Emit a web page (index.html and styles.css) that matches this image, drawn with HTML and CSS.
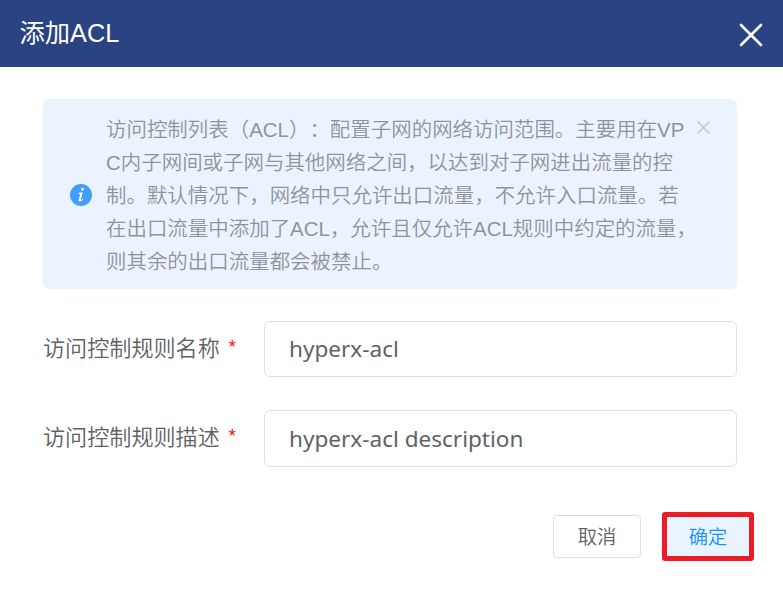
FILE: index.html
```
<!DOCTYPE html>
<html lang="zh-CN">
<head>
<meta charset="utf-8">
<title>添加ACL</title>
<link rel="stylesheet" href="styles.css">
</head>
<body>
<div class="dialog">
  <header class="dialog-header">
    <h1 class="dialog-title">添加ACL</h1>
    <button class="dialog-close" type="button">
      <svg width="24" height="24" viewBox="0 0 24 24"><path d="M2 2L22 22M22 2L2 22" fill="none" stroke="#fff" stroke-width="2.6" stroke-linecap="round"/></svg>
    </button>
  </header>
  <main class="dialog-body">
    <div class="alert">
      <svg class="alert-icon" width="22" height="22" viewBox="0 0 22 22"><circle cx="11" cy="11" r="11" fill="#409eff"/><circle cx="12.5" cy="5.3" r="1.5" fill="#fff"/><path d="M8.2 9.1L12.7 8.3L10.9 15.3Q10.7 16.3 11.4 15.9Q12.1 15.5 12.7 14.6L13.3 15.1Q11.6 17.7 9.6 17.6Q8.2 17.4 8.7 15.5L10.1 10.3Q10.3 9.6 8.1 9.7Z" fill="#fff"/></svg>
      <p class="alert-text"><span class="line">访问控制列表（ACL）：配置子网的网络访问范围。主要用在VP</span><span class="line">C内子网间或子网与其他网络之间，以达到对子网进出流量的控</span><span class="line">制。默认情况下，网络中只允许出口流量，不允许入口流量。若</span><span class="line">在出口流量中添加了ACL，允许且仅允许ACL规则中约定的流量，</span><span class="line">则其余的出口流量都会被禁止。</span></p>
      <svg class="alert-close" width="13" height="13" viewBox="0 0 13 13"><path d="M.5 .5L12.5 12.5M12.5 .5L.5 12.5" fill="none" stroke="#c0c4cc" stroke-width="1.4"/></svg>
    </div>
    <form class="form">
      <div class="field">
        <label class="label" for="name">访问控制规则名称<span class="required">*</span></label>
        <input class="input" id="name" type="text" value="hyperx-acl">
      </div>
      <div class="field">
        <label class="label" for="desc">访问控制规则描述<span class="required">*</span></label>
        <input class="input input-desc" id="desc" type="text" value="hyperx-acl description">
      </div>
    </form>
  </main>
  <footer class="dialog-footer">
    <button class="button" type="button">取消</button>
    <button class="button button-confirm" type="button">确定</button>
  </footer>
</div>
</body>
</html>
```
FILE: styles.css
```
* {
  box-sizing: border-box;
}

body {
  margin: 0;
  background: #fff;
  color: #606266;
  font-family: "Liberation Sans", "Noto Sans CJK SC", sans-serif;
  font-weight: 350;
  text-spacing-trim: space-all;
}

.dialog {
  width: 783px;
  height: 589px;
  overflow: hidden;
}

.dialog-header {
  display: flex;
  align-items: center;
  justify-content: space-between;
  height: 67px;
  padding: 0 20px 0 19.5px;
  background: #294383;
}

.dialog-title {
  margin: 0 0 1px;
  color: #fff;
  font-size: 25.3px;
  font-weight: 400;
  line-height: 36px;
}

.dialog-close {
  display: flex;
  margin-top: 3px;
  padding: 0;
  border: 0;
  background: none;
}

.dialog-body {
  padding: 32px 46px 0 43px;
}

.alert {
  display: flex;
  align-items: center;
  height: 190px;
  padding: 0 27px;
  border-radius: 6px;
  background: #ebf3ff;
  color: #909399;
}

.alert-icon {
  flex: none;
  margin-top: 1px;
}

.alert-text {
  width: 591px;
  margin: 2px 0 0 14px;
  font-size: 20.47px;
  line-height: 33px;
}

.line {
  display: block;
  white-space: nowrap;
}

.alert-close {
  flex: none;
  align-self: flex-start;
  margin-top: 22px;
}

.form {
  display: flex;
  flex-direction: column;
  gap: 33px;
  margin-top: 32px;
}

.field {
  display: flex;
  align-items: flex-start;
}

.label {
  display: flex;
  width: 221px;
  font-size: 22.1px;
  line-height: 56px;
}

.required {
  margin-left: 9px;
  color: #f00;
  font-size: 18px;
  line-height: 52px;
}

.input {
  flex: 1;
  min-width: 0;
  height: 56px;
  padding: 0 24px 2px;
  border: 1px solid #dcdfe6;
  border-radius: 6px;
  background: #fff;
  color: #606266;
  font-family: "Noto Sans", sans-serif;
  font-size: 22.55px;
  font-weight: 400;
}

.input-desc {
  height: 57px;
  padding-bottom: 0;
}

.dialog-footer {
  display: flex;
  align-items: center;
  justify-content: flex-end;
  gap: 21px;
  margin-top: 45px;
  padding-right: 29px;
}

.button {
  width: 88px;
  height: 43px;
  padding: 0 0 2px;
  border: 1px solid #dcdfe6;
  border-radius: 4px;
  background: #fff;
  color: #606266;
  font: inherit;
  font-size: 19.3px;
}

.button-confirm {
  width: 92px;
  height: 49px;
  border: 5px solid #ed1c24;
  border-radius: 3px;
  background: #e8f4ff;
  color: #1890ff;
}
```
